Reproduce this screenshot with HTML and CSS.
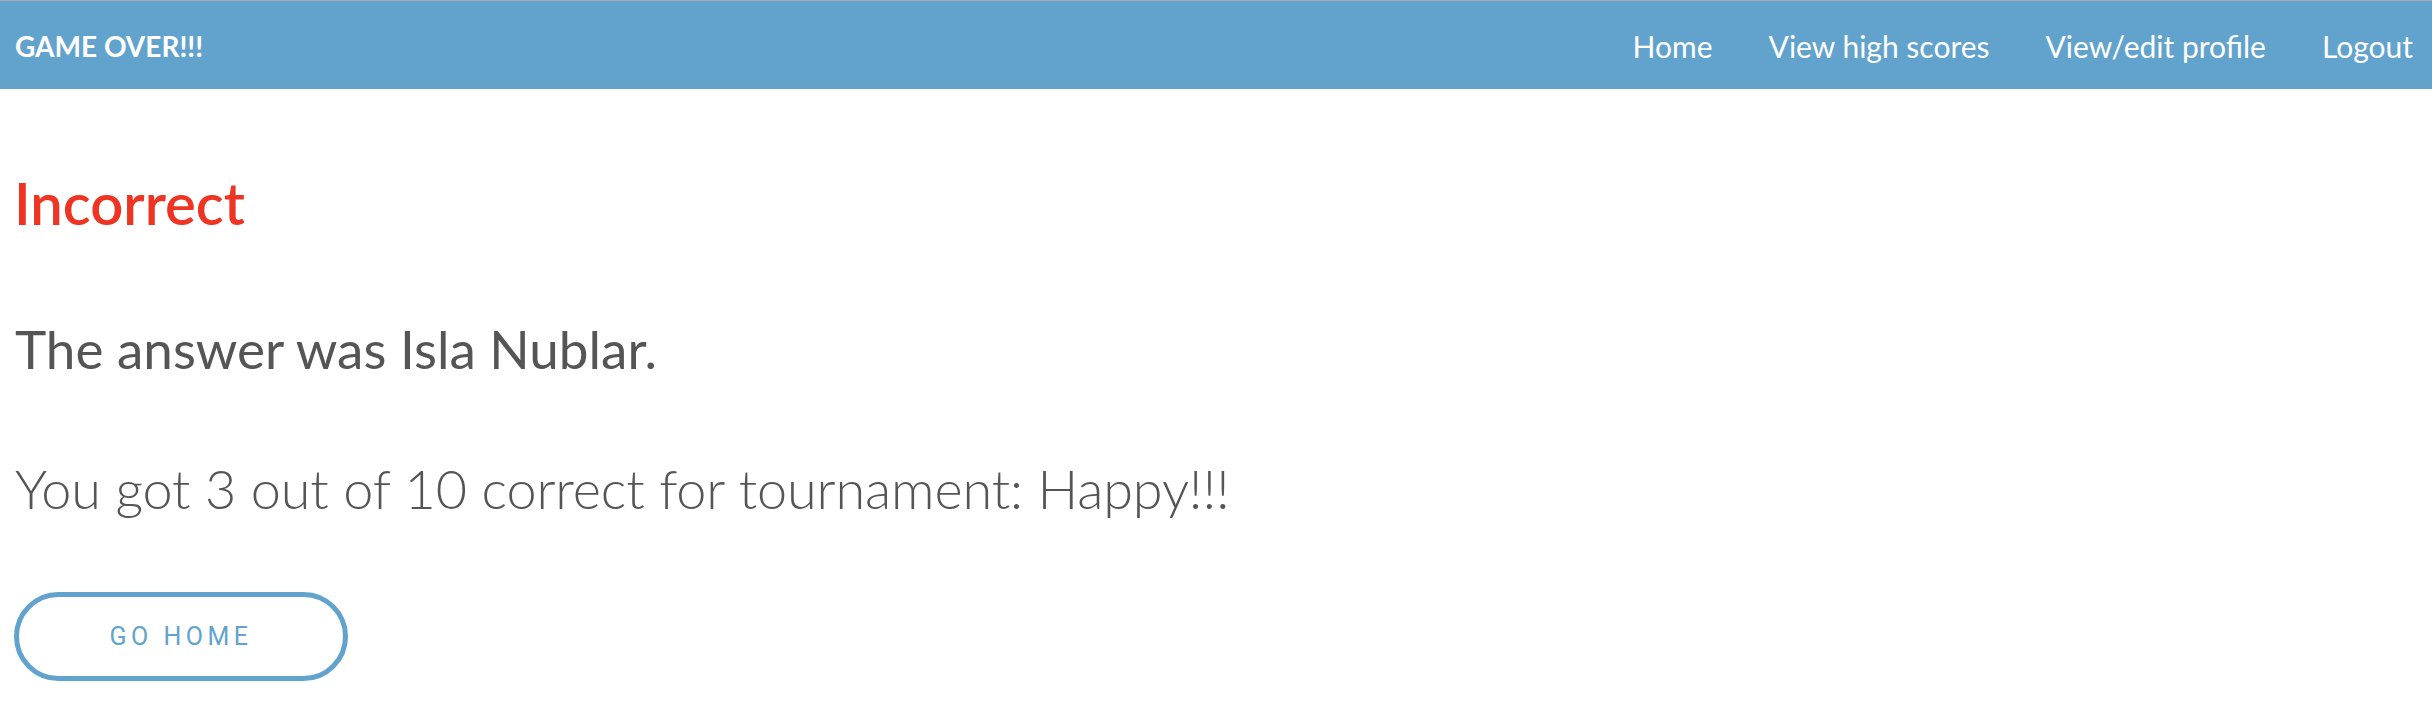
FILE: index.html
```html
<!DOCTYPE html>
<html lang="en">
<head>
<meta charset="utf-8">
<title>Game Over</title>
<link rel="stylesheet" href="styles.css">
</head>
<body>
<header class="topbar">
  <div class="brand">GAME OVER!!!</div>
  <nav class="nav">
    <a class="nav-link" href="#">Home</a>
    <a class="nav-link" href="#">View high scores</a>
    <a class="nav-link" href="#">View/edit profile</a>
    <a class="nav-link" href="#">Logout</a>
  </nav>
</header>
<main class="content">
  <h1 class="result">Incorrect</h1>
  <h2 class="answer">The answer was Isla Nublar.</h2>
  <p class="score">You got 3 out of 10 correct for tournament: Happy!!!</p>
  <a class="btn-home" href="#">GO HOME</a>
</main>
</body>
</html>
```
FILE: styles.css
```css
html, body {
  margin: 0;
  padding: 0;
  background: #ffffff;
}

body {
  font-family: Lato, "Source Sans Pro", "Noto Sans", sans-serif;
  color: #555555;
}

.topbar {
  box-sizing: border-box;
  height: 89px;
  border-top: 1px solid #adadad;
  background: #62a3cd;
  display: flex;
  align-items: center;
  justify-content: space-between;
  padding: 2px 19px 0 15px;
}

.brand {
  font-size: 28px;
  line-height: 30px;
  font-weight: 700;
  color: #ffffff;
}

.nav {
  display: flex;
  gap: 56px;
}

.nav-link {
  font-size: 30px;
  line-height: 30px;
  color: #ffffff;
  text-decoration: none;
}

.content {
  padding: 0 15px;
  display: flex;
  flex-direction: column;
  align-items: flex-start;
}

.result {
  margin: 84px 0 0 -1px;
  font-size: 58px;
  line-height: 60px;
  font-weight: 600;
  color: #ee3524;
}

.answer {
  margin: 86px 0 0 0;
  font-size: 53px;
  line-height: 60px;
  font-weight: 400;
  color: #555555;
}

.score {
  margin: 80px 0 0 0;
  font-size: 54px;
  line-height: 60px;
  font-weight: 300;
  letter-spacing: -0.12px;
  color: #555555;
}

.btn-home {
  box-sizing: border-box;
  margin-top: 73px;
  margin-left: -1px;
  width: 334px;
  height: 89px;
  border: 5px solid #62a3cd;
  border-radius: 45px;
  display: flex;
  align-items: center;
  justify-content: center;
  font-family: Roboto, "Liberation Sans", sans-serif;
  font-size: 25px;
  letter-spacing: 4.5px;
  color: #62a3cd;
  text-decoration: none;
}
```
